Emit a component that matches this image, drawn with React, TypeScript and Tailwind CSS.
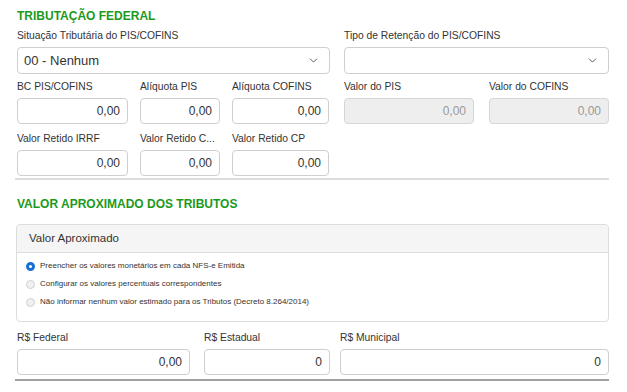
import { ChevronDown } from "lucide-react";

function Field({
  label,
  value,
  width,
  disabled,
}: {
  label: string;
  value: string;
  width: string;
  disabled?: boolean;
}) {
  return (
    <div className={`${width} shrink-0`}>
      <div className="truncate text-[10.3px] leading-[14px] text-[#333]">{label}</div>
      <div
        className={`mt-[4px] flex h-[26px] items-center justify-end rounded-[4px] border px-[7px] text-[12px] ${
          disabled ? "border-[#d6d6d6] bg-[#eeeeee] text-[#999]" : "border-[#cfcfcf] bg-white text-[#333]"
        }`}
      >
        {value}
      </div>
    </div>
  );
}

function Select({ label, value, width }: { label: string; value: string; width: string }) {
  return (
    <div className={width}>
      <div className="text-[10.3px] leading-[14px] text-[#333]">{label}</div>
      <div className="mt-[4px] flex h-[27px] items-center justify-between rounded-[4px] border border-[#cfcfcf] bg-white pl-[6px] pr-[9px] text-[13px] text-[#333]">
        <span>{value}</span>
        <ChevronDown className="h-[13px] w-[13px] text-[#444]" strokeWidth={1.6} />
      </div>
    </div>
  );
}

function Radio({ label, checked }: { label: string; checked?: boolean }) {
  return (
    <div className="flex h-[18px] items-center gap-[5px] text-[8px] text-[#333]">
      {checked ? (
        <span className="h-[9px] w-[9px] rounded-full border-[3px] border-[#1a6fd6] bg-white" />
      ) : (
        <span className="h-[9px] w-[9px] rounded-full border border-[#d0d0d0] bg-[#f0f0f0]" />
      )}
      <span>{label}</span>
    </div>
  );
}

export default function App() {
  return (
    <div
      className="h-[392px] w-[627px] overflow-hidden bg-white pl-[17px] pr-[18px] pt-[8px]"
      style={{ fontFamily: '"Liberation Sans", Arial, sans-serif' }}
    >
      <h2 className="text-[12px] font-bold leading-[16px] text-[#1c9a1c]">TRIBUTAÇÃO FEDERAL</h2>

      <div className="mt-[5px] flex gap-[14px]">
        <Select label="Situação Tributária do PIS/COFINS" value="00 - Nenhum" width="w-[313px]" />
        <Select label="Tipo de Retenção do PIS/COFINS" value="" width="flex-1" />
      </div>

      <div className="mt-[6px] flex">
        <Field label="BC PIS/COFINS" value="0,00" width="w-[111px]" />
        <div className="w-[12px]" />
        <Field label="Alíquota PIS" value="0,00" width="w-[80px]" />
        <div className="w-[12px]" />
        <Field label="Alíquota COFINS" value="0,00" width="w-[97px]" />
        <div className="w-[15px]" />
        <Field label="Valor do PIS" value="0,00" width="w-[130px]" disabled />
        <div className="w-[15px]" />
        <Field label="Valor do COFINS" value="0,00" width="w-[120px]" disabled />
      </div>

      <div className="mt-[8px] flex">
        <Field label="Valor Retido IRRF" value="0,00" width="w-[111px]" />
        <div className="w-[12px]" />
        <div className="w-[80px] shrink-0">
          <div className="text-[10.3px] leading-[14px] text-[#333]">Valor Retido C...</div>
          <div className="mt-[4px] flex h-[26px] items-center justify-end rounded-[4px] border border-[#cfcfcf] bg-white px-[7px] text-[12px] text-[#333]">
            0,00
          </div>
        </div>
        <div className="w-[12px]" />
        <Field label="Valor Retido CP" value="0,00" width="w-[97px]" />
      </div>

      <div className="-ml-[2px] mt-[2px] h-[2px] bg-[#dcdcdc]" />

      <h2 className="mt-[16px] text-[12px] font-bold leading-[16px] text-[#1c9a1c]">
        VALOR APROXIMADO DOS TRIBUTOS
      </h2>

      <div className="-ml-[1px] mt-[12px] rounded-[4px] border border-[#dddddd]">
        <div className="flex h-[28px] items-center rounded-t-[4px] border-b border-[#dddddd] bg-[#f5f5f5] px-[12px] text-[11.5px] text-[#333]">
          Valor Aproximado
        </div>
        <div className="px-[9px] pb-[10px] pt-[4px]">
          <Radio label="Preencher os valores monetários em cada NFS-e Emitida" checked />
          <Radio label="Configurar os valores percentuais correspondentes" />
          <Radio label="Não informar nenhum valor estimado para os Tributos (Decreto 8.264/2014)" />
        </div>
      </div>

      <div className="mt-[9px] flex">
        <Field label="R$ Federal" value="0,00" width="w-[173px]" />
        <div className="w-[14px]" />
        <Field label="R$ Estadual" value="0" width="w-[126px]" />
        <div className="w-[10px]" />
        <Field label="R$ Municipal" value="0" width="w-[269px]" />
      </div>

      <div className="-ml-[2px] mt-[4px] h-[2px] bg-[#a0a0a0]" />
    </div>
  );
}
